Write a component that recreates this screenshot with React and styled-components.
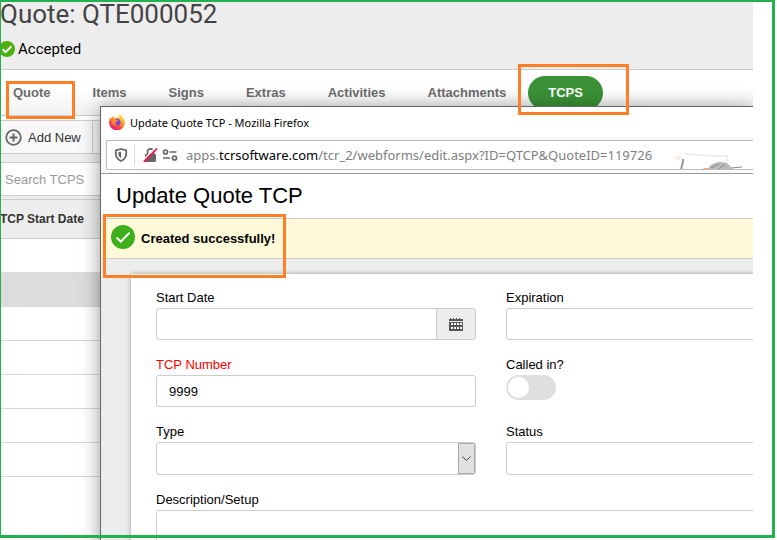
import React from "react";
import styled, { createGlobalStyle } from "styled-components";

const _green = "#22b14c";
const _orange = "#ff7f27";
const _line = "#cccccc";
const _gray = "#ededed";
const _roboto = `Roboto, "Liberation Sans", sans-serif`;
const _arial = `"Liberation Sans", Arial, sans-serif`;
const _system = `"Noto Sans", "Open Sans", sans-serif`;

const GlobalStyle = createGlobalStyle`
  * {
    box-sizing: border-box;
  }
  body {
    margin: 0;
    background: #fff;
    color: #000;
    font-family: ${_arial};
    font-size: 13px;
  }
  input, select, textarea, button {
    font: inherit;
    color: inherit;
  }
`;

const Page = styled.div`
  position: relative;
  height: 100vh;
  overflow: hidden;
  padding-right: 24px;
`;

const Screen = styled.div`
  position: relative;
  height: 100%;
  overflow: hidden;
`;

const Frame = styled.div`
  position: absolute;
  inset: 0 2px 2px 0;
  border: solid ${_green};
  border-width: 2px 3px 3px 1px;
  pointer-events: none;
`;

const Callout = styled.div`
  position: absolute;
  left: ${(p) => p.$x}px;
  top: ${(p) => p.$y}px;
  width: ${(p) => p.$w}px;
  height: ${(p) => p.$h}px;
  border: 3px solid ${_orange};
  pointer-events: none;
`;

const Header = styled.header`
  height: 70px;
  background: ${_gray};
  border-bottom: 1px solid ${_line};
  font-family: ${_roboto};
`;
Header.Title = styled.h1`
  margin: 0;
  color: #444;
  font-size: 26px;
  font-weight: 400;
  line-height: 28px;
`;
Header.Status = styled.div`
  display: flex;
  align-items: center;
  gap: 3px;
  margin-top: 12px;
  font-size: 15px;
  line-height: 18px;
  svg {
    margin-left: -1px;
  }
`;

const Tabs = styled.nav`
  display: flex;
  align-items: center;
  gap: 2px;
  height: 46px;
  margin-left: -7px;
  background: linear-gradient(#fff 40%, #f1f1f1);
  border-bottom: 1px solid ${_line};
`;
const Tab = styled.a`
  padding: 0 20px;
  border-radius: 17px;
  background: ${(p) => (p.$active ? "#3b9136" : "none")};
  color: ${(p) => (p.$active ? "#fff" : "#6b6b6b")};
  font-weight: 700;
  line-height: 34px;
  text-decoration: none;
`;

const Toolbar = styled.div`
  display: flex;
  margin-top: 4px;
  height: 34px;
  background: #f8f8f8;
  border: solid ${_line};
  border-width: 1px 0;
`;
const AddButton = styled.button`
  display: flex;
  align-items: center;
  gap: 6px;
  width: 93px;
  padding: 0 0 0 5px;
  border: 0;
  border-right: 1px solid ${_line};
  background: none;
  color: #333;
  white-space: nowrap;
`;

const List = styled.section`
  background: ${_gray};
`;
const Search = styled.input`
  display: block;
  width: 100%;
  height: 34px;
  padding: 0 5px;
  border: solid ${_line};
  border-width: 1px 0;
  border-radius: 0;
  background: #fff;
  &::placeholder {
    color: #999;
    opacity: 1;
  }
`;
const SearchBar = styled.div`
  padding: 8px 0 3px;
`;
const Table = styled.table`
  width: 100%;
  border-collapse: collapse;
  background: #fff;
  th {
    height: 39px;
    padding: 0;
    background: ${_gray};
    border: solid ${_line};
    border-width: 1px 0;
    color: #333;
    font-size: 12px;
    font-weight: 700;
    text-align: left;
  }
`;
const Cell = styled.td`
  height: 34px;
  padding: 0;
  background: ${(p) => (p.$selected ? "#dcdcdc" : "#fff")};
  border-bottom: 1px solid #d8d8d8;
`;

const Window = styled.div`
  position: absolute;
  top: 106px;
  left: 100px;
  right: 0;
  bottom: 0;
  overflow: hidden;
  border: solid #666;
  border-width: 1px 0 0 1px;
  background: ${_gray};
`;
const WindowShadow = styled.div`
  position: absolute;
  top: 106px;
  left: 100px;
  right: 0;
  bottom: -30px;
  box-shadow: 0 2px 18px rgba(0, 0, 0, 0.4);
`;
const TitleBar = styled.div`
  display: flex;
  align-items: center;
  gap: 5px;
  height: 30px;
  padding-left: 8px;
  background: #fff;
  font-family: ${_system};
  font-size: 11px;
`;
const UrlRow = styled.div`
  height: 37px;
  padding: 3px 0 3px 5px;
  background: #f9f9fa;
  border-bottom: 1px solid #999;
`;
const UrlBar = styled.div`
  position: relative;
  display: flex;
  align-items: center;
  height: 30px;
  padding-left: 7px;
  overflow: hidden;
  border: solid #bbb;
  border-width: 1px 0 1px 1px;
  border-radius: 2px 0 0 2px;
  background: #fff;
`;
UrlBar.Icons = styled.div`
  display: flex;
  align-items: center;
  gap: 4px;
  margin-left: 6px;
  padding-left: 8px;
  border-left: 1px solid #ddd;
  height: 22px;
`;
UrlBar.Text = styled.span`
  margin-left: 8px;
  color: #808080;
  font-family: ${_system};
  font-size: 13px;
  white-space: nowrap;
  b {
    color: #000;
    font-weight: 400;
  }
`;
const Watermark = styled.svg`
  position: absolute;
  right: 8px;
  bottom: 0;
`;

const FormTitle = styled.h2`
  margin: 0;
  padding-left: 15px;
  background: #fff;
  border-bottom: 1px solid ${_line};
  font-size: 22px;
  font-weight: 400;
  line-height: 44px;
`;
const Message = styled.div`
  display: flex;
  align-items: center;
  gap: 6px;
  height: 40px;
  padding: 0 10px 4px;
  background: #fef9d9;
  border-bottom: 1px solid ${_line};
  font-weight: 700;
  strong {
    padding-top: 4px;
  }
`;
const Form = styled.form`
  display: grid;
  grid-template-columns: 320px 320px;
  gap: 17px 30px;
  width: 720px;
  margin: 15px 0 0 30px;
  padding: 16px 25px;
  background: #fff;
  box-shadow: 0 0 5px rgba(0, 0, 0, 0.35);
`;
const Field = styled.div`
  display: flex;
  flex-direction: column;
  align-items: flex-start;
  gap: 3px;
  grid-column: ${(p) => (p.$wide ? "1 / -1" : "auto")};
  label {
    color: ${(p) => (p.$required ? "#f00" : "#000")};
    line-height: 15px;
  }
`;
const Box = styled.div`
  display: flex;
  width: 100%;
  height: 32px;
  overflow: hidden;
  border: 1px solid ${_line};
  border-radius: 3px;
  background: #fff;
`;
const SelectBox = styled(Box)`
  height: 33px;
`;
const TextBox = styled(Box)`
  height: 100px;
`;
const Input = styled.input`
  flex: 1;
  min-width: 0;
  padding: 0 12px;
  border: 0;
  outline: 0;
  background: none;
`;
const TextArea = styled.textarea`
  flex: 1;
  padding: 8px 12px;
  border: 0;
  resize: none;
`;
const Select = styled.select`
  flex: 1;
  padding: 0 12px;
  border: 0;
  background: none;
  appearance: none;
`;
const CalendarButton = styled.button`
  display: grid;
  place-items: center;
  width: 39px;
  padding: 0;
  border: 0;
  border-left: 1px solid ${_line};
  background: ${_gray};
`;
const Arrow = styled.span`
  display: grid;
  place-items: center;
  width: 17px;
  border: 1px solid #aaa;
  background: #e1e1e1;
  pointer-events: none;
`;
const Switch = styled.input`
  appearance: none;
  display: flex;
  width: 50px;
  height: 25px;
  margin: 0;
  padding: 2px;
  border-radius: 13px;
  background: #dfdfdf;
  &::before {
    content: "";
    width: 21px;
    height: 21px;
    border-radius: 50%;
    background: #fff;
  }
  &:checked {
    justify-content: flex-end;
    background: #3b9136;
  }
`;

const CheckIcon = ({ size, color, weight }) => (
  <svg width={size} height={size} viewBox="0 0 24 24">
    <circle cx="12" cy="12" r="12" fill={color} />
    <path
      d="M5.5 12.5l4.3 4.2 8.7-8.9"
      fill="none"
      stroke="#fff"
      strokeWidth={weight}
    />
  </svg>
);

const PlusIcon = () => (
  <svg width="17" height="17" viewBox="0 0 17 17" fill="none" stroke="#666">
    <circle cx="8.5" cy="8.5" r="7.3" strokeWidth="1.8" />
    <path d="M8.5 4.5v8M4.5 8.5h8" strokeWidth="2" />
  </svg>
);

const FirefoxIcon = () => (
  <svg width="16" height="16" viewBox="0 0 16 16">
    <defs>
      <linearGradient id="flame" x1="0.85" y1="0.05" x2="0.3" y2="1">
        <stop offset="0" stopColor="#fff04a" />
        <stop offset="0.35" stopColor="#ffa82c" />
        <stop offset="0.7" stopColor="#ff4a3a" />
        <stop offset="1" stopColor="#e31587" />
      </linearGradient>
    </defs>
    <path
      d="M10.6 0c2.2 1.6 2.5 2.6 3.2 3.8 1.4 1 2.1 2.7 2.1 4.5A7.9 7.9 0 0 1 0 8.6C0 6.2.8 4.3 1.8 3.2c0 .8.2 1.1.5 1.5C3 3.3 4 2.6 4.8 2.3c-.1.8.1 1.4.7 1.9C7.3 3.6 9.3 3.7 10.4 3.6 9.9 2.4 10 1 10.6 0z"
      fill="url(#flame)"
    />
    <circle cx="8" cy="8.3" r="3.5" fill="#7542e5" />
    <path
      d="M3 5.2c1.8-.8 3.3-.3 4.6.5 1.3.1 1.9.5 1.7 1-.6.5-1.9.6-2.2 1.5.1 1-.9 1.6-1.9 1.3.8 1.2 2.3 1.5 3.5.9-2.5 3-6.5.2-5.7-5.2z"
      fill="#ff8a2c"
    />
  </svg>
);

const ShieldIcon = () => (
  <svg width="14" height="14" viewBox="0 0 14 14">
    <path
      d="M7 1l5.2 1.3v3.5c0 3.2-1.7 5.6-5.2 7.2C3.5 11.4 1.8 9 1.8 5.8V2.3z"
      fill="none"
      stroke="#666"
      strokeWidth="1.8"
      strokeLinejoin="round"
    />
    <path d="M7 3.6v6.7C5.2 9.2 4.4 7.7 4.4 5.8V4.2z" fill="#666" />
  </svg>
);

const LockIcon = () => (
  <svg width="15" height="16" viewBox="0 0 15 16">
    <path
      d="M4.5 8V4.8a3 3 0 0 1 6 0V8"
      fill="none"
      stroke="#666"
      strokeWidth="1.8"
    />
    <rect x="2" y="7" width="11" height="8" rx="1" fill="#666" />
    <path d="M0 13.3L12.8 0.5" stroke="#fff" strokeWidth="1.6" />
    <path d="M0.8 14.8L14 1.6" stroke="#ff1744" strokeWidth="1.8" />
  </svg>
);

const PermissionsIcon = () => (
  <svg
    width="16"
    height="16"
    viewBox="0 0 16 16"
    fill="none"
    stroke="#666"
    strokeWidth="1.7"
  >
    <circle cx="3.5" cy="5" r="2" />
    <path d="M7.5 5h7M1 11h7" />
    <circle cx="12.5" cy="11" r="2" />
  </svg>
);

const CalendarIcon = () => (
  <svg width="14" height="15" viewBox="0 0 14 15">
    <path d="M1 1h1v1h2V1h1v1h2V1h1v1h2V1h1v1h3v2H0V2h1z" fill="#555" />
    <path d="M0 5h14v9H0z" fill="#555" />
    <path
      d="M2 6h2v2H2zM5 6h2v2H5zM8 6h2v2H8zM11 6h2v2h-2zM2 10h2v2H2zM5 10h2v2H5zM8 10h2v2H8zM11 10h2v2h-2z"
      fill="#fff"
    />
  </svg>
);

const Scooter = () => (
  <Watermark width="72" height="19" viewBox="0 0 72 19" fill="none">
    <path d="M12 4l30 2h12v8" stroke="#eee" strokeWidth="2" />
    <path d="M1 8l5-3 3 3-4 3z" fill="#fdeee5" />
    <path d="M10 9v3l-2 7" stroke="#999" strokeWidth="2" />
    <path d="M35 19c2-5 7-7 13-7 6 0 9 3 11 7z" fill="#bbb" />
    <path d="M38 18l8-4M46 19l6-5M58 18l11-1" stroke="#888" />
    <path d="M29 19l3-1h3v1z" fill="#ffa05c" />
  </Watermark>
);

const tabs = [
  "Quote",
  "Items",
  "Signs",
  "Extras",
  "Activities",
  "Attachments",
  "TCPS",
];

const rows = [1, 2, 3, 4, 5, 6, 7];

const QuotePage = () => (
  <>
    <Header>
      <Header.Title>Quote: QTE000052</Header.Title>
      <Header.Status>
        <CheckIcon size={16} color="#4caf0e" weight={3} />
        Accepted
      </Header.Status>
    </Header>
    <Tabs>
      {tabs.map((tab) => (
        <Tab key={tab} href={"#" + tab} $active={tab === "TCPS"}>
          {tab}
        </Tab>
      ))}
    </Tabs>
    <List>
      <Toolbar>
        <AddButton type="button">
          <PlusIcon />
          Add New
        </AddButton>
      </Toolbar>
      <SearchBar>
        <Search aria-label="Search TCPS" placeholder="Search TCPS" />
      </SearchBar>
      <Table>
        <thead>
          <tr>
            <th>TCP Start Date</th>
          </tr>
        </thead>
        <tbody>
          {rows.map((row) => (
            <tr key={row}>
              <Cell $selected={row === 2} />
            </tr>
          ))}
        </tbody>
      </Table>
    </List>
  </>
);

const EditWindow = () => (
  <Window>
    <TitleBar>
      <FirefoxIcon />
      Update Quote TCP - Mozilla Firefox
    </TitleBar>
    <UrlRow>
      <UrlBar>
        <ShieldIcon />
        <UrlBar.Icons>
          <LockIcon />
          <PermissionsIcon />
        </UrlBar.Icons>
        <UrlBar.Text>
          apps.<b>tcrsoftware.com</b>
          /tcr_2/webforms/edit.aspx?ID=QTCP&amp;QuoteID=119726
        </UrlBar.Text>
        <Scooter />
      </UrlBar>
    </UrlRow>
    <FormTitle>Update Quote TCP</FormTitle>
    <Message>
      <CheckIcon size={24} color="#3dae1c" weight={2} />
      <strong>Created successfully!</strong>
    </Message>
    <Form>
      <Field>
        <label htmlFor="start">Start Date</label>
        <Box>
          <Input id="start" />
          <CalendarButton type="button" aria-label="Pick a date">
            <CalendarIcon />
          </CalendarButton>
        </Box>
      </Field>
      <Field>
        <label htmlFor="expiration">Expiration</label>
        <Box>
          <Input id="expiration" />
        </Box>
      </Field>
      <Field $required>
        <label htmlFor="number">TCP Number</label>
        <Box>
          <Input id="number" defaultValue="9999" />
        </Box>
      </Field>
      <Field>
        <label htmlFor="called">Called in?</label>
        <Switch id="called" type="checkbox" />
      </Field>
      <Field>
        <label htmlFor="type">Type</label>
        <SelectBox>
          <Select id="type" />
          <Arrow>
            <svg width="9" height="6" fill="none" stroke="#444">
              <path d="M0.5 0.5l4 4 4-4" />
            </svg>
          </Arrow>
        </SelectBox>
      </Field>
      <Field>
        <label htmlFor="status">Status</label>
        <SelectBox>
          <Select id="status" />
        </SelectBox>
      </Field>
      <Field $wide>
        <label htmlFor="description">Description/Setup</label>
        <TextBox>
          <TextArea id="description" />
        </TextBox>
      </Field>
    </Form>
  </Window>
);

const App = () => (
  <Page>
    <GlobalStyle />
    <Screen>
      <QuotePage />
      <WindowShadow />
      <EditWindow />
    </Screen>
    <Callout $x={6} $y={81} $w={69} $h={38} />
    <Callout $x={518} $y={64} $w={111} $h={51} />
    <Callout $x={103} $y={214} $w={183} $h={64} />
    <Frame />
  </Page>
);

export default App;
